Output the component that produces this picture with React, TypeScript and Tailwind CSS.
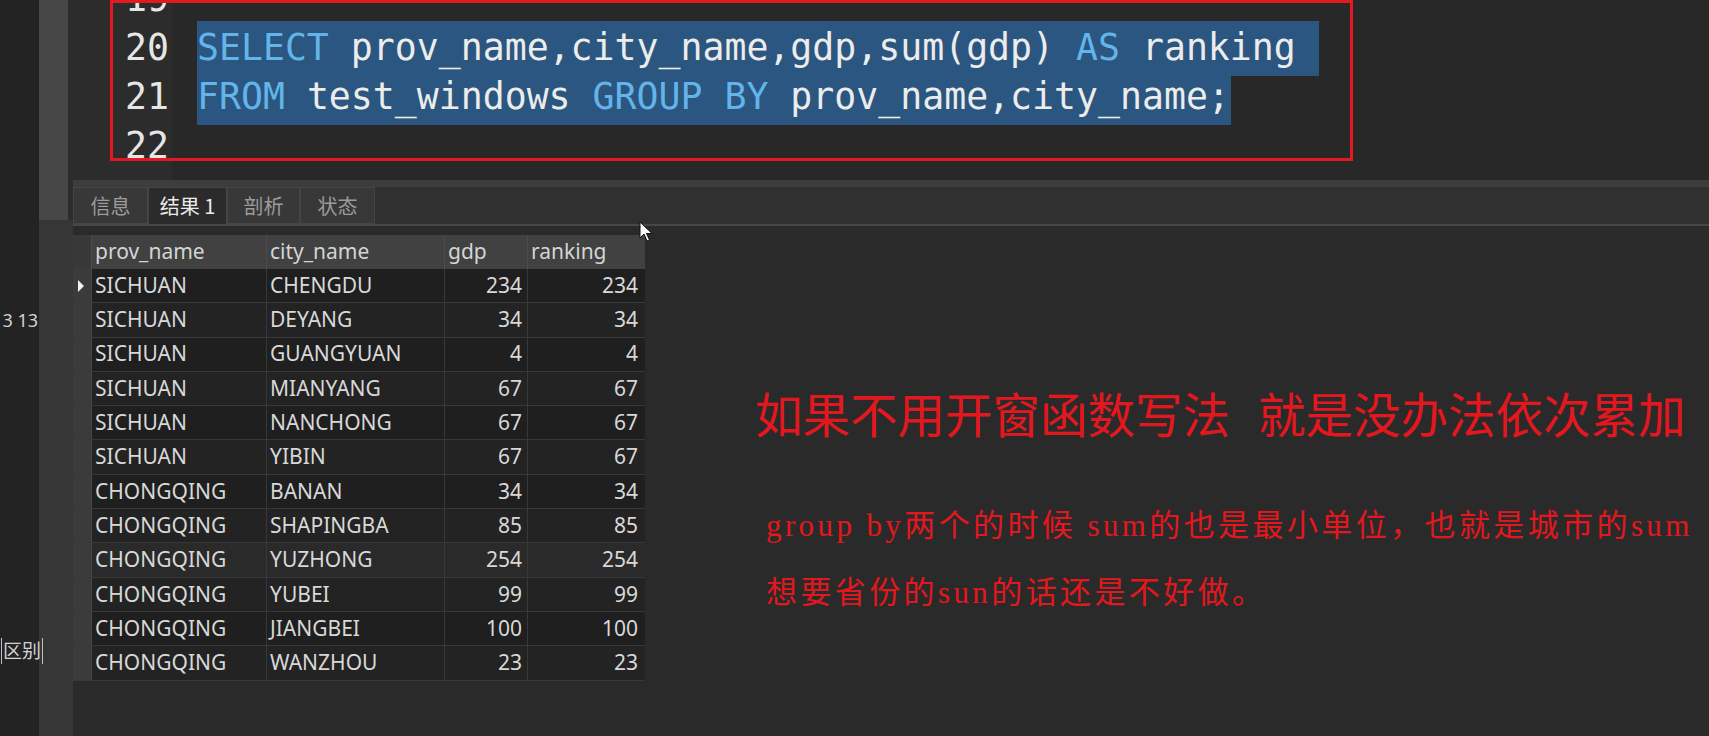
import React from 'react';

const rows = [
  ['SICHUAN', 'CHENGDU', '234', '234'],
  ['SICHUAN', 'DEYANG', '34', '34'],
  ['SICHUAN', 'GUANGYUAN', '4', '4'],
  ['SICHUAN', 'MIANYANG', '67', '67'],
  ['SICHUAN', 'NANCHONG', '67', '67'],
  ['SICHUAN', 'YIBIN', '67', '67'],
  ['CHONGQING', 'BANAN', '34', '34'],
  ['CHONGQING', 'SHAPINGBA', '85', '85'],
  ['CHONGQING', 'YUZHONG', '254', '254'],
  ['CHONGQING', 'YUBEI', '99', '99'],
  ['CHONGQING', 'JIANGBEI', '100', '100'],
  ['CHONGQING', 'WANZHOU', '23', '23'],
];

const kw = 'text-[#62b4ea]';

function CodeLine({ num, children, selW }: { num: string; children?: React.ReactNode; selW?: string }) {
  return (
    <div className="flex h-[49px] items-center">
      <div className="w-[99px] shrink-0 pr-[3px] text-right text-[#e6e6e6]">{num}</div>
      <div className="pl-[25px]">
        {children && <div className={`${selW} bg-[#2b5680] whitespace-pre`}>{children}</div>}
      </div>
    </div>
  );
}

function Tab({ label, active, w }: { label: string; active?: boolean; w: string }) {
  return (
    <div
      className={`${w} flex h-[37px] items-center justify-center border border-[#454545] ${
        active ? 'bg-[#2b2b2b] text-[#ececec] border-b-0' : 'bg-[#383838] text-[#9c9c9c]'
      }`}
    >
      {label}
    </div>
  );
}

export default function App() {
  return (
    <div className="relative flex h-[736px] w-[1709px] overflow-hidden bg-[#2a2a2a]">
      {/* far left panel */}
      <div className="relative w-[39px] shrink-0 bg-[#232323] font-['Noto_Sans','Noto_Sans_CJK_SC',sans-serif] text-[#d2d2d2]">
        <div className="absolute right-[1px] top-[307px] whitespace-nowrap text-[18px]">3 13</div>
        <div className="absolute left-[1px] top-[638px] whitespace-nowrap border-l border-r border-[#bfbfbf] px-[1px] text-[19px] leading-[26px]">
          区别
        </div>
      </div>

      {/* scroll column */}
      <div className="flex w-[34px] shrink-0 flex-col bg-[#363636]">
        <div className="flex h-[220px]">
          <div className="w-[29px] bg-[#474747]" />
          <div className="w-[5px] bg-[#2d2d2d]" />
        </div>
      </div>

      {/* main */}
      <div className="flex min-w-0 flex-1 flex-col">
        {/* editor */}
        <div className="relative h-[180px] overflow-hidden bg-[#282828] font-['DejaVu_Sans_Mono',monospace] text-[36.5px] text-[#ececec]">
          <div className="absolute inset-y-0 left-0 w-[99px] bg-[#2c2c2c]" />
          <div className="relative mt-[-25px]">
            <CodeLine num="19" />
            <CodeLine num="20" selW="w-[1122px]">
              <span className={kw}>SELECT</span> prov_name,city_name,gdp,sum(gdp) <span className={kw}>AS</span> ranking
            </CodeLine>
            <CodeLine num="21" selW="w-[1034px]">
              <span className={kw}>FROM</span> test_windows <span className={kw}>GROUP BY</span> prov_name,city_name;
            </CodeLine>
            <CodeLine num="22" />
          </div>
          {/* red annotation box */}
          <div className="absolute left-[37px] top-0 h-[161px] w-[1243px] border-[3px] border-[#e3191f]" />
        </div>

        <div className="h-[7px] bg-[#3d3d3d]" />

        {/* tabs */}
        <div className="flex h-[37px] items-end bg-[#303030] font-['Noto_Sans_CJK_SC',sans-serif] text-[20px]">
          <Tab label="信息" w="w-[75px]" />
          <Tab label="结果 1" w="w-[79px]" active />
          <Tab label="剖析" w="w-[73px]" />
          <Tab label="状态" w="w-[75px]" />
        </div>
        <div className="h-[2px] bg-[#474747]" />

        {/* results */}
        <div className="flex flex-1 pt-[9px]">
          <div className="w-[572px] shrink-0 font-['Noto_Sans',sans-serif] text-[21px] text-[#d8d8d8]">
            <div className="grid h-[34px] grid-cols-[19px_175px_178px_83px_117px] bg-[#414141] text-[#d4d4d4]">
              <div className="border-r border-[#4c4c4c] bg-[#383838]" />
              <div className="flex items-center border-r border-[#4c4c4c] pl-[3px]">prov_name</div>
              <div className="flex items-center border-r border-[#4c4c4c] pl-[3px]">city_name</div>
              <div className="flex items-center border-r border-[#4c4c4c] pl-[3px]">gdp</div>
              <div className="flex items-center pl-[3px]">ranking</div>
            </div>
            {rows.map((r, i) => (
              <div
                key={i}
                className={`grid h-[34.3px] grid-cols-[19px_175px_178px_83px_117px] border-b border-[#383838] ${
                  i === 8 ? 'bg-[#2a2a2a]' : i % 2 === 0 ? 'bg-[#1f1f1f]' : 'bg-[#232323]'
                }`}
              >
                <div className="flex items-center border-r border-[#454545] bg-[#3b3b3b] pl-[4px]">
                  {i === 0 && (
                    <svg width="8" height="14" viewBox="0 0 8 14">
                      <path d="M1 1 L7 7 L1 13 Z" fill="#f0f0f0" />
                    </svg>
                  )}
                </div>
                <div className="flex items-center border-r border-[#383838] pl-[3px]">{r[0]}</div>
                <div className="flex items-center border-r border-[#383838] pl-[3px]">{r[1]}</div>
                <div className="flex items-center justify-end border-r border-[#383838] pr-[5px]">{r[2]}</div>
                <div className="flex items-center justify-end pr-[7px]">{r[3]}</div>
              </div>
            ))}
          </div>

          {/* red notes */}
          <div className="ml-[110px] flex flex-col pt-[154px] text-[#e3171e]">
            <div className="whitespace-nowrap font-['Noto_Sans_CJK_SC',sans-serif] text-[47.5px] leading-[47.5px]">
              如果不用开窗函数写法<span className="inline-block w-[28px]" />就是没办法依次累加
            </div>
            <div className="ml-[11px] mt-[72px] whitespace-nowrap font-['Liberation_Serif','Noto_Sans_CJK_SC',serif] text-[31px] leading-[34px] tracking-[3.4px]">
              group by两个的时候 sum的也是最小单位，也就是城市的sum
            </div>
            <div className="ml-[11px] mt-[33px] whitespace-nowrap font-['Liberation_Serif','Noto_Sans_CJK_SC',serif] text-[31px] leading-[34px] tracking-[3.4px]">
              想要省份的sun的话还是不好做。
            </div>
          </div>
        </div>
      </div>

      {/* mouse pointer */}
      <svg className="absolute left-[639px] top-[221px]" width="14" height="22" viewBox="0 0 14 22">
        <path d="M1 1 L1 17 L5 13 L8 20 L10.5 19 L7.5 12.5 L13 12.5 Z" fill="#ffffff" stroke="#111" strokeWidth="1" />
      </svg>
    </div>
  );
}
